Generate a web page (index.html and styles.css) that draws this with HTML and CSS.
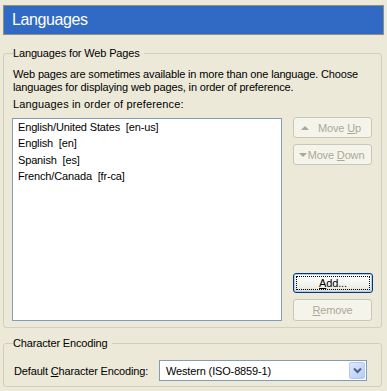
FILE: index.html
```html
<!DOCTYPE html>
<html>
<head>
    <meta charset="utf-8" />
    <title>Languages</title>
    <link rel="stylesheet" href="styles.css">
</head>
<body>
    <div class="page_header">Languages</div>

    <fieldset class="group group_langs">
        <legend>Languages for Web Pages</legend>
        <p class="desc">Web pages are sometimes available in more than one language. Choose languages for displaying web pages, in order of preference.</p>
        <p class="list_label">Languages in order of preference:</p>
        <div class="lang_row">
            <ul class="lang_list">
                <li>English/United States&nbsp; [en-us]</li>
                <li>English&nbsp; [en]</li>
                <li>Spanish&nbsp; [es]</li>
                <li>French/Canada&nbsp; [fr-ca]</li>
            </ul>
            <div class="lang_buttons">
                <button class="btn" disabled><span class="tri tri_up"></span><span>Move <u>U</u>p</span></button>
                <button class="btn btn_down" disabled><span class="tri tri_down"></span><span>Move <u>D</u>own</span></button>
                <div class="spacer"></div>
                <button class="btn btn_default"><span><u>A</u>dd...</span></button>
                <button class="btn btn_last" disabled><span><u>R</u>emove</span></button>
            </div>
        </div>
    </fieldset>

    <fieldset class="group group_enc">
        <legend>Character Encoding</legend>
        <div class="enc_row">
            <span class="enc_label">Default <u>C</u>haracter Encoding:</span>
            <div class="select">
                <span class="select_text">Western (ISO-8859-1)</span>
                <span class="select_btn">
                    <svg width="9" height="7" viewBox="0 0 9 7"><path d="M1 1.5 L4.5 5 L8 1.5" fill="none" stroke="#4d6185" stroke-width="2"/></svg>
                </span>
            </div>
        </div>
    </fieldset>
</body>
</html>
```

FILE: styles.css
```css
*
{
    margin: 0;
    padding: 0;
    box-sizing: border-box;
}

body
{
    width: 387px;
    height: 391px;
    background: #ece9d8;
    font-family: 'Liberation Sans', Arial, sans-serif;
    font-size: 11px;
    letter-spacing: -0.15px;
    color: #000;
    overflow: hidden;
}

.page_header
{
    margin: 5px 3px 0 3px;
    height: 30px;
    padding-left: 8px;
    background: #316ac5;
    border: 1px solid #8e8d82;
    color: #fff;
    font-size: 16px;
    letter-spacing: -0.4px;
    line-height: 28px;
}

.group
{
    margin: 0 5px 0 3px;
    border: 1px solid #d0d0bf;
    border-radius: 3px;
    padding: 0 8px 6px 9px;
}

    .group legend
    {
        margin-left: 0;
        padding: 0 4px 0 0;
        line-height: 13px;
    }

.group_langs
{
    margin-top: 12px;
}

.desc
{
    margin-top: 8px;
    line-height: 13px;
}

.list_label
{
    margin-top: 4px;
    line-height: 13px;
    letter-spacing: 0.15px;
}

.lang_row
{
    display: flex;
    gap: 11px;
    margin-top: 7px;
    margin-left: -1px;
    height: 203px;
}

.lang_list
{
    list-style: none;
    width: 270px;
    background: #fff;
    border: 1px solid #7f9db9;
    padding: 0 5px;
}

    .lang_list li
    {
        line-height: 16.3px;
    }

.lang_buttons
{
    display: flex;
    flex-direction: column;
    width: 80px;
    margin-top: -1px;
}

.spacer
{
    flex: 1;
}

.btn
{
    font-family: inherit;
    font-size: 11px;
    letter-spacing: -0.15px;
    height: 21px;
    width: 79px;
    border: 1px solid #c9c7ba;
    border-radius: 3px;
    background: #f5f4ea;
    color: #aca899;
    display: flex;
    align-items: center;
    justify-content: center;
    margin-bottom: 6px;
}

    .btn u
    {
        text-decoration: underline;
    }

.btn_down
{
    margin-bottom: 0;
}

.btn_last
{
    margin-bottom: 0;
    height: 22px;
}

.btn_default
{
    width: 80px;
    height: 20px;
    border: 1px solid #003c74;
    background: linear-gradient(#ffffff, #f0f0ea 70%, #dcdad0);
    color: #000;
    box-shadow: inset 0 0 0 1px #b6c9f0;
    outline: 1px dotted #000;
    outline-offset: -4px;
}

.tri
{
    width: 0;
    height: 0;
    border-left: 4px solid transparent;
    border-right: 4px solid transparent;
}

.tri_up
{
    border-bottom: 4px solid #aca899;
    margin-right: 9px;
    margin-left: -3px;
}

.tri_down
{
    border-top: 4px solid #aca899;
    margin-right: 1px;
    margin-left: -2px;
}

.group_enc
{
    margin-top: 9px;
    height: 50px;
    padding-top: 10px;
}

.enc_row
{
    display: flex;
    align-items: center;
}

.enc_label
{
    width: 145px;
    margin-left: 1px;
}

.select
{
    display: flex;
    align-items: center;
    width: 208px;
    height: 21px;
    background: #fff;
    border: 1px solid #7f9db9;
    padding: 1px;
}

.select_text
{
    flex: 1;
    padding-left: 5px;
}

.select_btn
{
    width: 16px;
    height: 17px;
    border: 1px solid #b5c8f4;
    border-radius: 2px;
    background: linear-gradient(135deg, #dfe8fd, #b7cbf6);
    display: flex;
    align-items: center;
    justify-content: center;
}
```
